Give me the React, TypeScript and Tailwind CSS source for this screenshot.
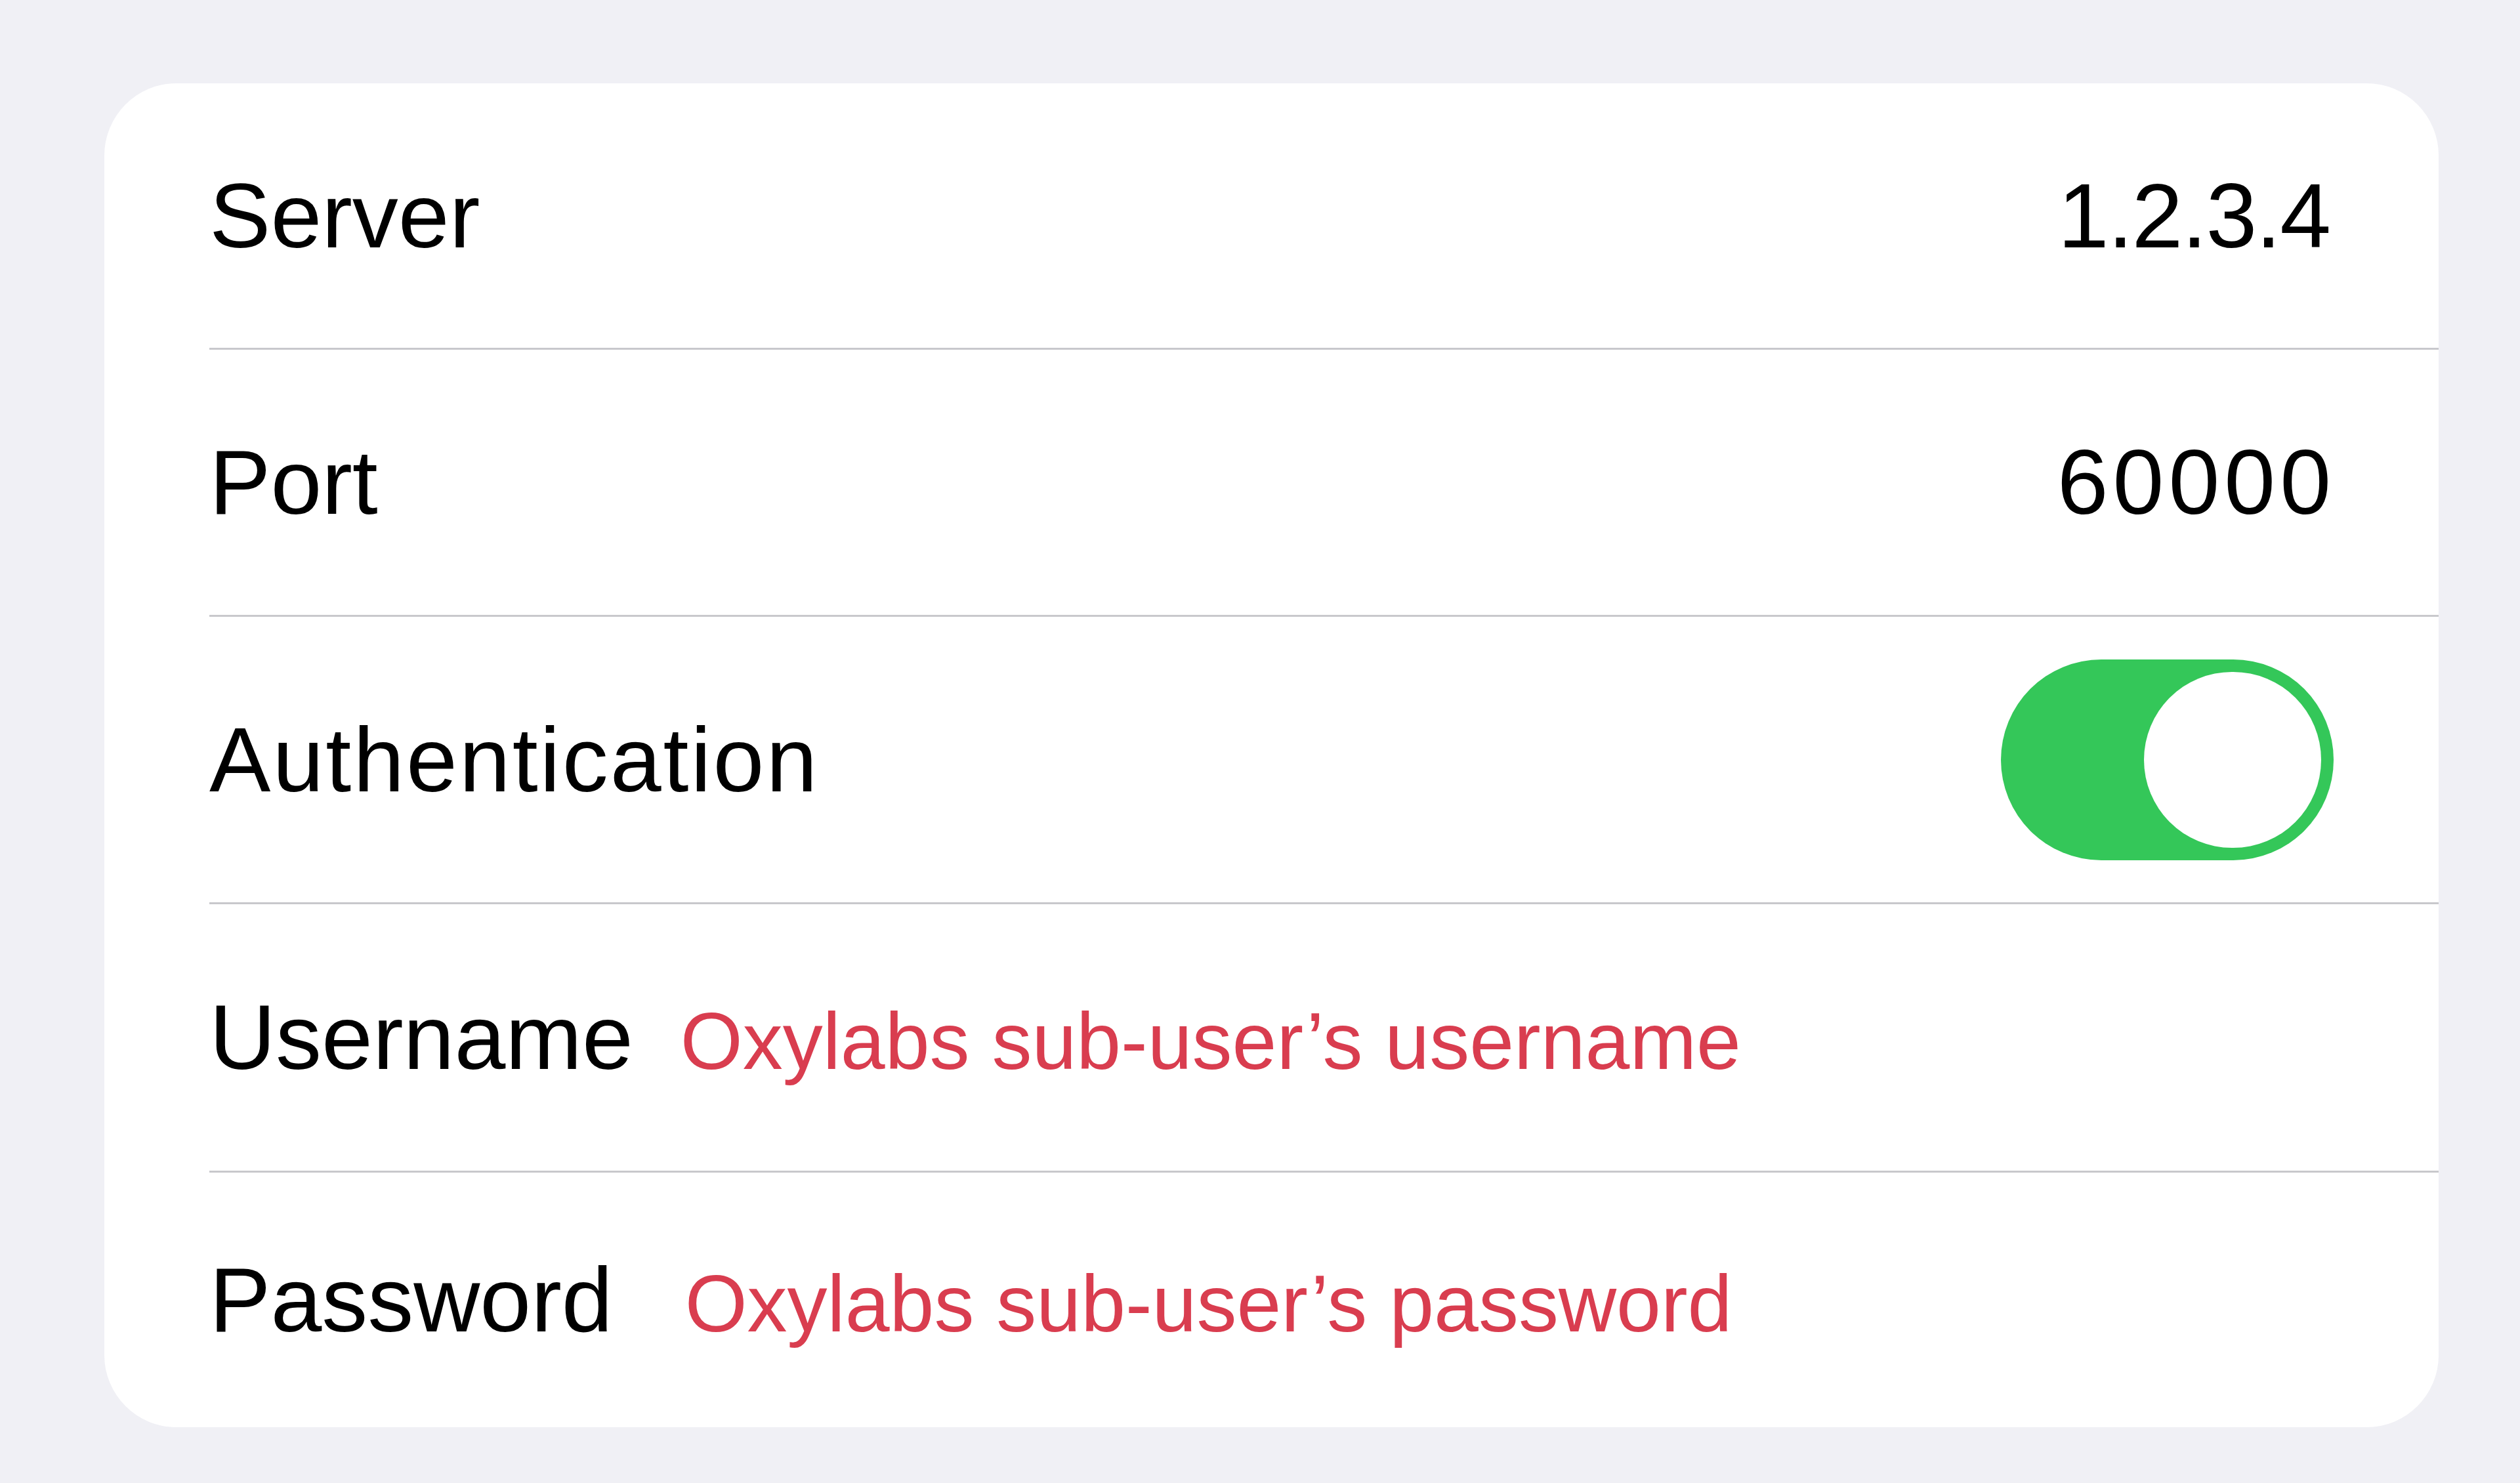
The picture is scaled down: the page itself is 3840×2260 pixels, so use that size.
const label = "text-[140px] leading-none text-black";
const hint = "text-[122px] leading-none text-[#d93d4f]";

function Toggle() {
  return (
    <div className="flex h-[306px] w-[507px] items-center justify-end rounded-full bg-[#34c759] pr-[19px]">
      <div className="h-[268px] w-[270px] rounded-full bg-white" />
    </div>
  );
}

export default function App() {
  return (
    <div
      className="min-h-screen w-full bg-[#f0f0f5] pt-[127px]"
      style={{ fontFamily: '"Liberation Sans", Arial, sans-serif' }}
    >
      <div className="ml-[159px] w-[3557px] overflow-hidden rounded-[110px] bg-white pl-[160px]">
        <div className="flex h-[406px] items-center justify-between border-b-[3px] border-[#c8c8cc] pr-[162px]">
          <span className={label}>Server</span>
          <span className={`${label} mr-[4px] tracking-[-2px]`}>1.2.3.4</span>
        </div>

        <div className="flex h-[407px] items-center justify-between border-b-[3px] border-[#c8c8cc] pr-[162px]">
          <span className={label}>Port</span>
          <span className={`${label} mr-[-5px] tracking-[7px]`}>60000</span>
        </div>

        <div className="flex h-[438px] items-center justify-between border-b-[3px] border-[#c8c8cc] pr-[160px]">
          <span className={`${label} tracking-[3px]`}>Authentication</span>
          <Toggle />
        </div>

        <div className="flex h-[409px] items-center border-b-[3px] border-[#c8c8cc] pr-[160px]">
          <div className="flex items-baseline">
            <span className={label}>Username</span>
            <span className={`${hint} ml-[72px]`}>Oxylabs sub-user’s username</span>
          </div>
        </div>

        <div className="flex h-[388px] items-center pr-[160px]">
          <div className="flex items-baseline">
            <span className={label}>Password</span>
            <span className={`${hint} ml-[110px]`}>Oxylabs sub-user’s password</span>
          </div>
        </div>
      </div>
    </div>
  );
}
